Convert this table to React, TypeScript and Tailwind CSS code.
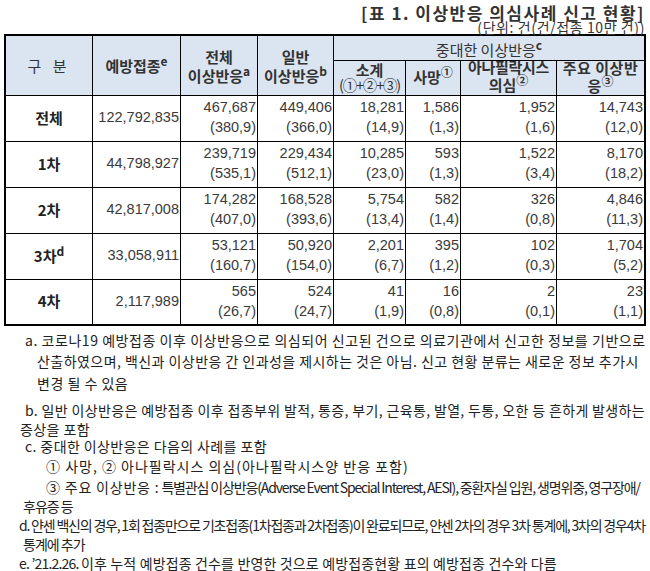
import React from "react";

const KR = "font-['Noto_Sans_CJK_KR','Noto_Sans',sans-serif]";
const NUM = "font-['Liberation_Sans','Noto_Sans_CJK_KR',sans-serif]";

type Row = {
  label: React.ReactNode;
  total: string;
  cells: [string, string][];
};

const rows: Row[] = [
  {
    label: "전체",
    total: "122,792,835",
    cells: [
      ["467,687", "(380,9)"],
      ["449,406", "(366,0)"],
      ["18,281", "(14,9)"],
      ["1,586", "(1,3)"],
      ["1,952", "(1,6)"],
      ["14,743", "(12,0)"],
    ],
  },
  {
    label: "1차",
    total: "44,798,927",
    cells: [
      ["239,719", "(535,1)"],
      ["229,434", "(512,1)"],
      ["10,285", "(23,0)"],
      ["593", "(1,3)"],
      ["1,522", "(3,4)"],
      ["8,170", "(18,2)"],
    ],
  },
  {
    label: "2차",
    total: "42,817,008",
    cells: [
      ["174,282", "(407,0)"],
      ["168,528", "(393,6)"],
      ["5,754", "(13,4)"],
      ["582", "(1,4)"],
      ["326", "(0,8)"],
      ["4,846", "(11,3)"],
    ],
  },
  {
    label: (
      <>
        3차<sup className="text-[12px] font-bold">d</sup>
      </>
    ),
    total: "33,058,911",
    cells: [
      ["53,121", "(160,7)"],
      ["50,920", "(154,0)"],
      ["2,201", "(6,7)"],
      ["395", "(1,2)"],
      ["102", "(0,3)"],
      ["1,704", "(5,2)"],
    ],
  },
  {
    label: "4차",
    total: "2,117,989",
    cells: [
      ["565", "(26,7)"],
      ["524", "(24,7)"],
      ["41", "(1,9)"],
      ["16", "(0,8)"],
      ["2", "(0,1)"],
      ["23", "(1,1)"],
    ],
  },
];

const H = "bg-[#dbe5f1] text-[#333] overflow-hidden";

export default function App() {
  return (
    <div className={`w-[650px] h-[571px] bg-white overflow-hidden ${KR}`}>
      {/* Title */}
      <div className="h-[34px] pr-[5px] flex flex-col items-end">
        <div className="pt-[3px] leading-[19px] text-[17px] font-bold tracking-[1.5px] text-[#333] whitespace-nowrap">
          [표 1. 이상반응 의심사례 신고 현황]
        </div>
        <div className="-mt-[1px] leading-[13px] text-[14px] text-[#333] tracking-[0.6px] whitespace-nowrap">
          (단위: 건(건/접종 10만 건))
        </div>
      </div>

      {/* Table */}
      <div className="ml-[4px] w-[642px] bg-black p-[2px] grid gap-[1px] grid-cols-[86px_87px_76px_75px_71px_54px_95px_87px] grid-rows-[24px_34px_45px_45px_45px_45px_44px]">
        <div className={`${H} row-span-2 flex items-center justify-center text-[15px] tracking-[4px] pt-[1px]`}>
          구 분
        </div>
        <div className={`${H} row-span-2 flex items-center justify-center text-[15px] font-bold pt-[1px]`}>
          <span>
            예방접종<sup className="text-[12px]">e</sup>
          </span>
        </div>
        <div className={`${H} row-span-2 flex flex-col items-center justify-center text-[15px] font-bold leading-[19px] pt-[1px]`}>
          <span>전체</span>
          <span>
            이상반응<sup className="text-[12px]">a</sup>
          </span>
        </div>
        <div className={`${H} row-span-2 flex flex-col items-center justify-center text-[15px] font-bold leading-[19px] pt-[1px]`}>
          <span>일반</span>
          <span>
            이상반응<sup className="text-[12px]">b</sup>
          </span>
        </div>
        <div className={`${H} col-span-4 flex items-center justify-center text-[15px] leading-[18px] pt-[4px]`}>
          <span>
            중대한 이상반응<sup className="text-[12px] font-bold">c</sup>
          </span>
        </div>
        <div className={`${H} flex flex-col items-center`}>
          <span className="mt-[1px] text-[15px] font-bold leading-[16px]">소계</span>
          <span className="-mt-[1px] text-[14.5px] leading-[15px] tracking-[-1.2px] whitespace-nowrap">
            (①+②+③)
          </span>
        </div>
        <div className={`${H} flex items-center justify-center text-[15px] font-bold pb-[1px]`}>
          <span>
            사망<sup className="text-[12px]">①</sup>
          </span>
        </div>
        <div className={`${H} flex flex-col items-center text-[15px] font-bold leading-[18px] whitespace-nowrap`}>
          <span className="-mt-[3px] tracking-[-0.3px]">아나필락시스</span>
          <span>
            의심<sup className="text-[12px]">②</sup>
          </span>
        </div>
        <div className={`${H} flex flex-col items-center text-[15px] font-bold leading-[18px] whitespace-nowrap`}>
          <span className="-mt-[2px] tracking-[0.5px]">주요 이상반</span>
          <span>
            응<sup className="text-[12px]">③</sup>
          </span>
        </div>

        {rows.map((r, i) => (
          <React.Fragment key={i}>
            <div className="bg-white flex items-center justify-center text-[15px] font-bold text-[#222] pb-[1px]">
              <span>{r.label}</span>
            </div>
            <div className={`bg-white flex items-center justify-end pr-[1px] text-[14.5px] text-[#3a3a3a] ${NUM} pb-[1px]`}>
              {r.total}
            </div>
            {r.cells.map((c, j) => (
              <div
                key={j}
                className={`bg-white flex flex-col items-end pr-[1px] pt-[1px] text-[14.5px] leading-[20px] text-[#3a3a3a] ${NUM}`}
              >
                <span>{c[0]}</span>
                <span>{c[1]}</span>
              </div>
            ))}
          </React.Fragment>
        ))}
      </div>

      {/* Footnotes */}
      <div className="text-[14px] text-[#222] whitespace-nowrap">
        <div className="mt-[4px] h-[20px] leading-[20px] pl-[25px] tracking-[0.55px]">
          a. 코로나19 예방접종 이후 이상반응으로 의심되어 신고된 건으로 의료기관에서 신고한 정보를 기반으로
        </div>
        <div className="mt-[1px] h-[20px] leading-[20px] pl-[37px] tracking-[0.45px]">
          산출하였으며, 백신과 이상반응 간 인과성을 제시하는 것은 아님. 신고 현황 분류는 새로운 정보 추가시
        </div>
        <div className="mt-[2px] h-[20px] leading-[20px] pl-[37px] tracking-[0.5px]">변경 될 수 있음</div>
        <div className="mt-[7px] h-[20px] leading-[20px] pl-[25px] tracking-[0.35px]">
          b. 일반 이상반응은 예방접종 이후 접종부위 발적, 통증, 부기, 근육통, 발열, 두통, 오한 등 흔하게 발생하는
        </div>
        <div className="-mt-[1px] h-[20px] leading-[20px] pl-[20px] tracking-[0.4px]">증상을 포함</div>
        <div className="-mt-[3px] h-[20px] leading-[20px] pl-[25px] tracking-[0.4px]">c. 중대한 이상반응은 다음의 사례를 포함</div>
        <div className="mt-0 h-[20px] leading-[20px] pl-[46px] tracking-[1px]">
          ① 사망, ② 아나필락시스 의심(아나필락시스양 반응 포함)
        </div>
        <div className="mt-[1px] h-[20px] leading-[20px] pl-[46px]">
          <span className="tracking-[0.8px]">③ 주요 이상반응 :</span>
          <span className="tracking-[-1.15px]">
            {" "}특별관심 이상반응(Adverse Event Special Interest, AESI), 중환자실 입원, 생명위중, 영구장애/
          </span>
        </div>
        <div className="-mt-[1px] h-[20px] leading-[20px] pl-[23px] tracking-[-1px]">후유증 등</div>
        <div className="-mt-[1px] h-[20px] leading-[20px] pl-[19px] tracking-[-1.2px]">
          d. 얀센 백신의 경우, 1회 접종만으로 기초접종(1차접종과 2차접종)이 완료되므로, 얀센 2차의 경우 3차 통계에, 3차의 경우4차
        </div>
        <div className="-mt-[1px] h-[20px] leading-[20px] pl-[23px] tracking-[-1px]">통계에 추가</div>
        <div className="-mt-[1px] h-[20px] leading-[20px] pl-[19px]">
          <span className="tracking-[-0.8px]">e. ’21.2.26. </span>
          <span className="tracking-[0.15px]">
            이후 누적 예방접종 건수를 반영한 것으로 예방접종현황 표의 예방접종 건수와 다름
          </span>
        </div>
      </div>
    </div>
  );
}
